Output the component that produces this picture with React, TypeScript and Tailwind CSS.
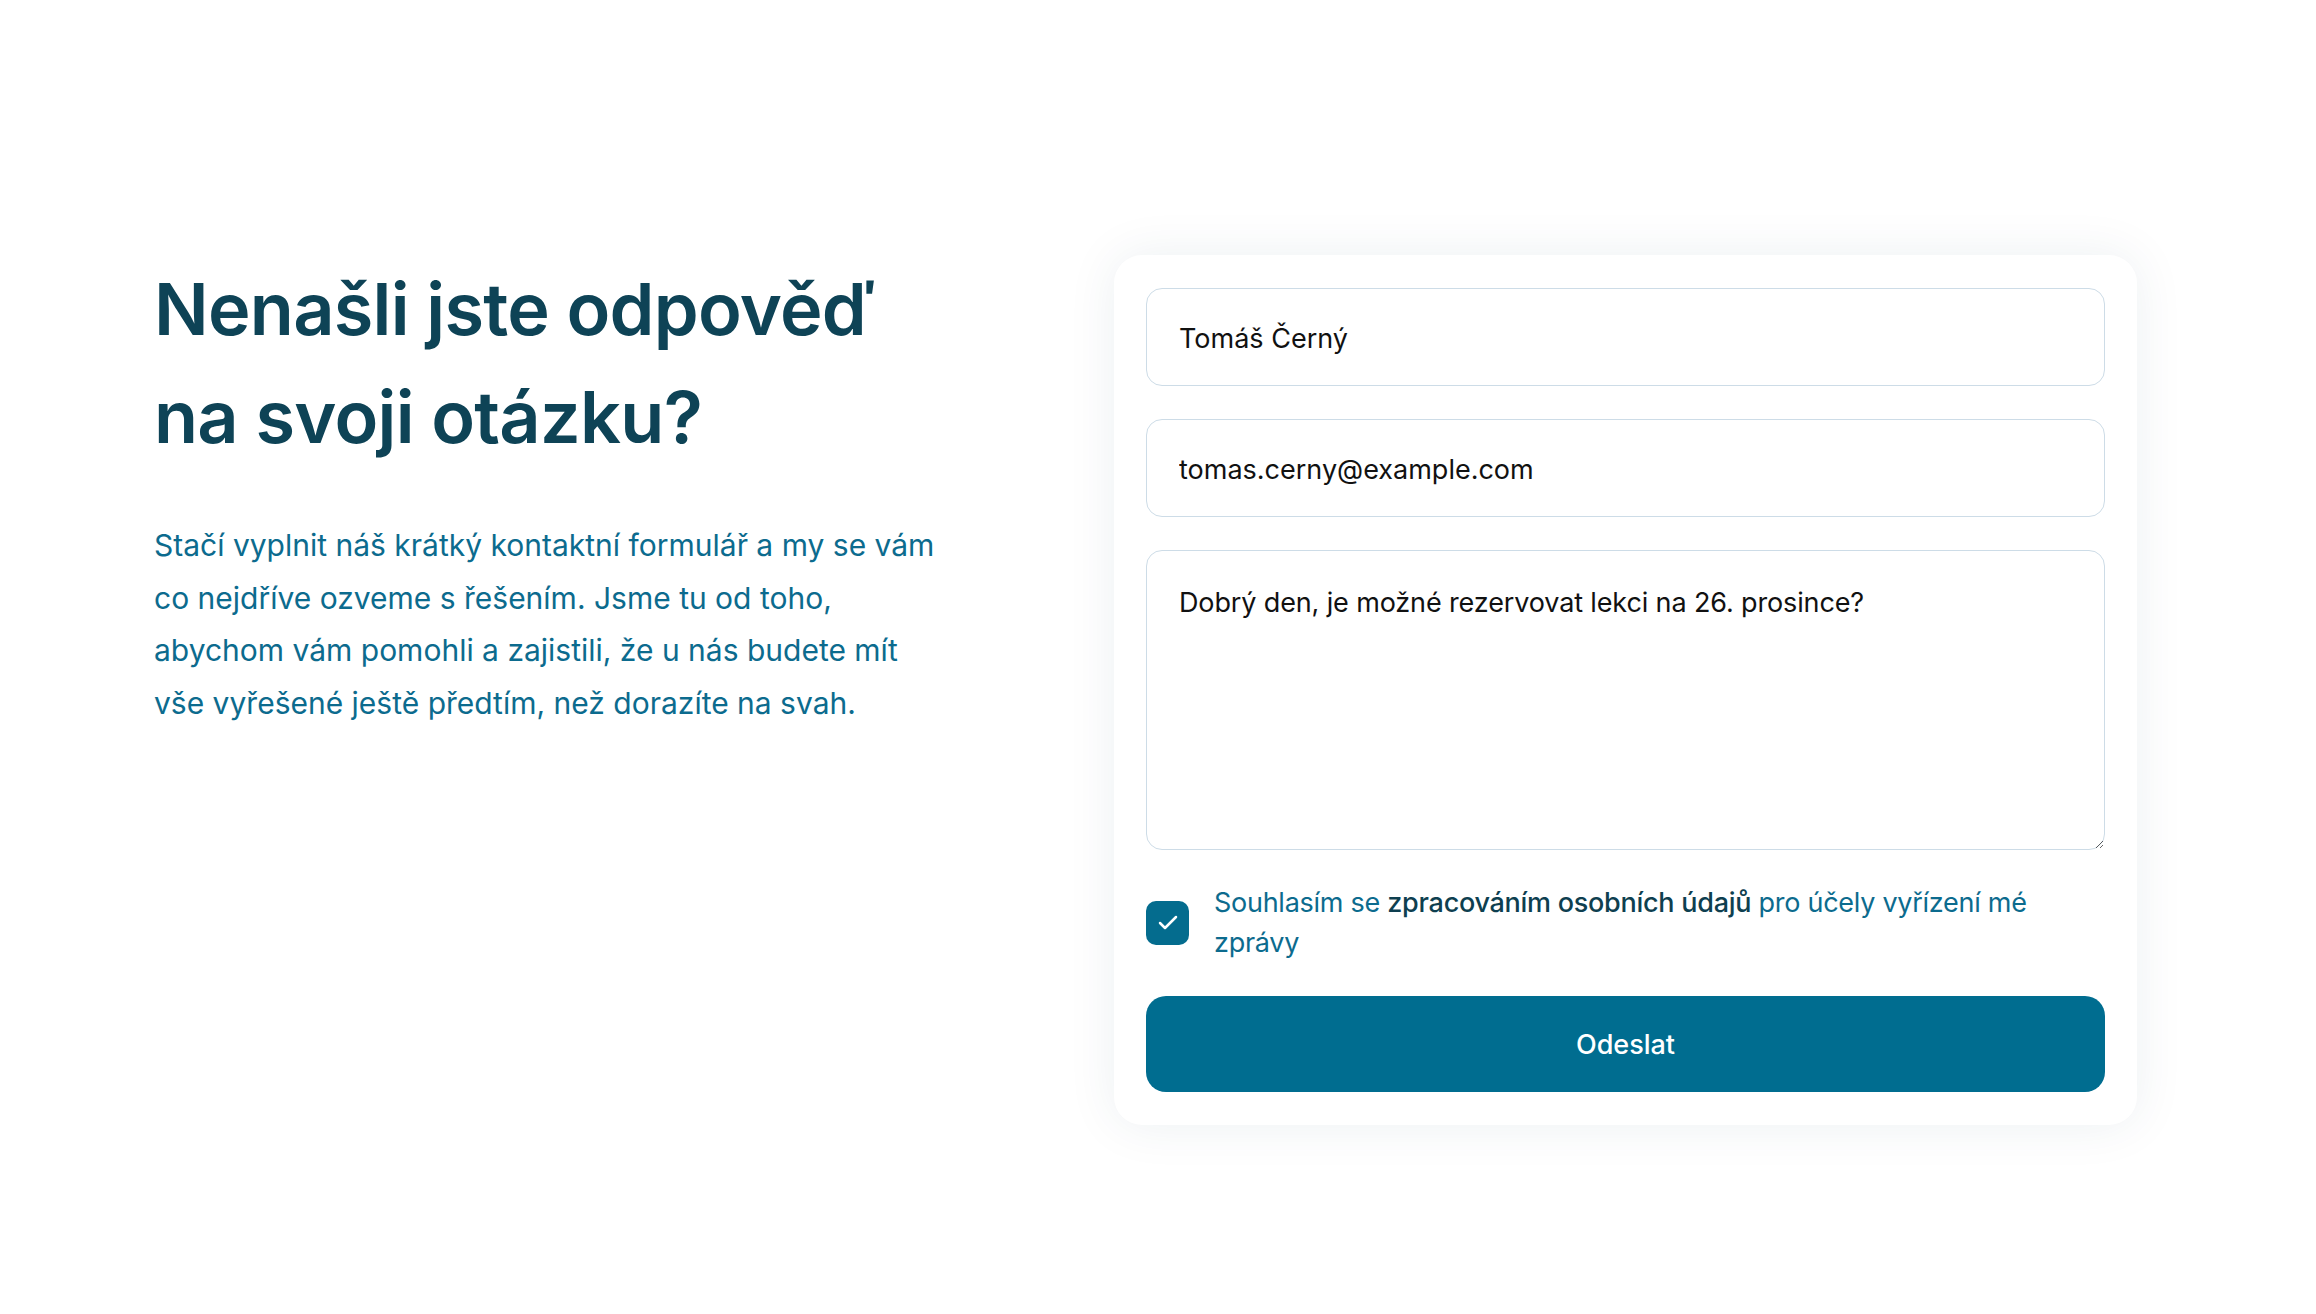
import React, { useState } from 'react';
import { Check } from 'lucide-react';

export default function App() {
  const [agreed, setAgreed] = useState(true);

  return (
    <div className="min-h-screen bg-white font-['Inter',sans-serif] pt-[255px] pl-[154px] pr-[179px]">
      <div className="flex items-start justify-between">
        {/* Intro */}
        <div className="w-[790px]">
          <h1 className="text-[72px] leading-[108px] font-semibold text-[#0e4356] tracking-[-0.01em]">
            Nenašli jste odpověď na svoji otázku?
          </h1>
          <p className="mt-12 text-[30px] leading-[52.5px] text-[#0c6b8e]">
            Stačí vyplnit náš krátký kontaktní formulář a my se vám co nejdříve ozveme s řešením. Jsme tu od toho,
            abychom vám pomohli a zajistili, že u nás budete mít vše vyřešené ještě předtím, než dorazíte na svah.
          </p>
        </div>

        {/* Form card */}
        <form
          className="w-[1023px] bg-white rounded-[28px] p-8 pt-[33px] pb-[33px] flex flex-col gap-[33px] shadow-[0_0_50px_rgba(20,60,90,0.08)]"
          onSubmit={e => e.preventDefault()}
        >
          <input
            type="text"
            defaultValue="Tomáš Černý"
            className="h-[98px] w-full rounded-[16px] border-[1.5px] border-[#cddce7] px-8 pt-[2px] text-[27px] text-[#111] outline-none"
          />
          <input
            type="email"
            defaultValue="tomas.cerny@example.com"
            className="h-[98px] w-full rounded-[16px] border-[1.5px] border-[#cddce7] px-8 pt-[2px] text-[27px] text-[#111] outline-none"
          />
          <textarea
            defaultValue="Dobrý den, je možné rezervovat lekci na 26. prosince?"
            className="h-[300px] w-full rounded-[16px] border-[1.5px] border-[#cddce7] px-8 pt-[32px] pb-[30px] text-[27px] leading-[40px] tracking-[-0.005em] text-[#111] outline-none"
          />

          <label className="flex items-center gap-[25px] cursor-pointer">
            <button
              type="button"
              onClick={() => setAgreed(a => !a)}
              className={`shrink-0 w-[43px] h-[44px] rounded-[10px] flex items-center justify-center ${
                agreed ? 'bg-[#046c8e]' : 'bg-white border-2 border-[#cddce7]'
              }`}
            >
              {agreed && <Check className="w-[24px] h-[24px] text-white" strokeWidth={2.5} />}
            </button>
            <span className="text-[27px] leading-[40px] tracking-[-0.01em] text-[#0c6b8e]">
              Souhlasím se <span className="font-medium text-[#0e3f50]">zpracováním osobních údajů</span> pro účely
              vyřízení mé zprávy
            </span>
          </label>

          <button
            type="submit"
            className="h-[96px] w-full rounded-[20px] bg-[#006d90] pt-[2px] text-white text-[27px] font-medium"
          >
            Odeslat
          </button>
        </form>
      </div>
    </div>
  );
}
